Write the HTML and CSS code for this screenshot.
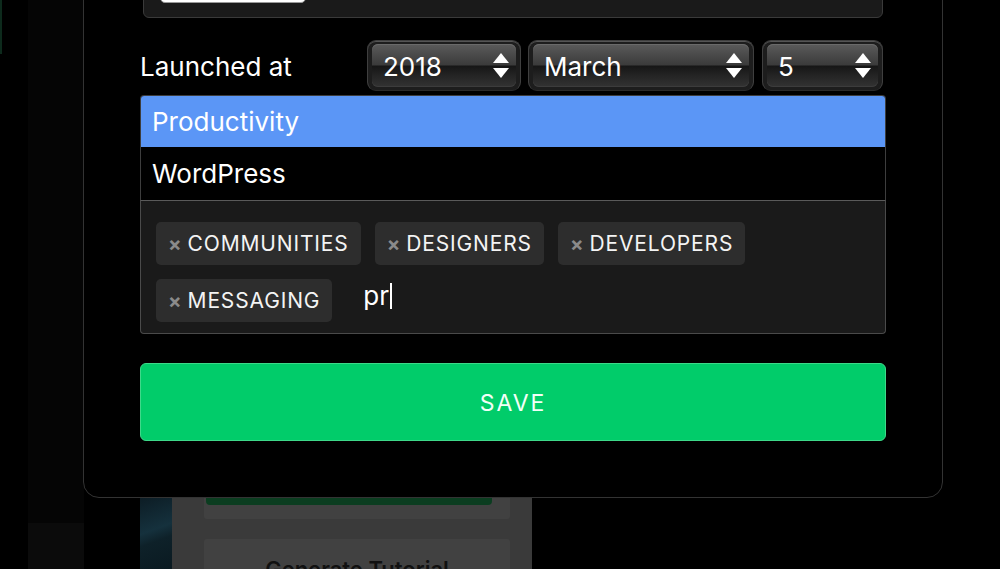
FILE: index.html
```html
<!DOCTYPE html>
<html lang="en">
<head>
<meta charset="utf-8">
<title>Edit product</title>
<link rel="stylesheet" href="styles.css">
</head>
<body>
<div class="stage">
  <div class="backdrop">
    <div class="bg-edge"></div>
    <div class="bg-strip"></div>
    <div class="bg-strip-low"></div>
    <div class="bg-blue"></div>
    <div class="bg-panel">
      <div class="bg-card bg-card-top"><div class="bg-green"></div></div>
      <div class="bg-card bg-card-low"><span class="bg-text">Generate Tutorial</span></div>
    </div>
  </div>

  <div class="modal">
    <div class="top-box"><div class="top-input"></div></div>

    <div class="launch-row">
      <span class="launch-label">Launched at</span>
      <div class="selects">
        <div class="sel sel-year"><div class="sel-inner"><span>2018</span>
          <svg class="arrows" viewBox="0 0 16 26" width="16" height="26"><polygon points="8,0 16,10 0,10" fill="#fff"/><polygon points="0,15 16,15 8,25" fill="#fff"/></svg></div></div>
        <div class="sel sel-month"><div class="sel-inner"><span>March</span>
          <svg class="arrows" viewBox="0 0 16 26" width="16" height="26"><polygon points="8,0 16,10 0,10" fill="#fff"/><polygon points="0,15 16,15 8,25" fill="#fff"/></svg></div></div>
        <div class="sel sel-day"><div class="sel-inner"><span>5</span>
          <svg class="arrows" viewBox="0 0 16 26" width="16" height="26"><polygon points="8,0 16,10 0,10" fill="#fff"/><polygon points="0,15 16,15 8,25" fill="#fff"/></svg></div></div>
      </div>
    </div>

    <div class="combo">
      <ul class="options">
        <li class="option option-active">Productivity</li>
        <li class="option">WordPress</li>
      </ul>
      <div class="tags">
        <span class="tag"><span class="tag-x">×</span>COMMUNITIES</span>
        <span class="tag"><span class="tag-x">×</span>DESIGNERS</span>
        <span class="tag"><span class="tag-x">×</span>DEVELOPERS</span>
        <span class="tag"><span class="tag-x">×</span>MESSAGING</span>
        <span class="tag-input">pr<span class="caret"></span></span>
      </div>
    </div>

    <button class="save">SAVE</button>
  </div>
</div>
</body>
</html>
```

FILE: styles.css
```css
* { box-sizing: border-box; }
html, body { margin: 0; padding: 0; background: #000; }
body { font-family: Inter, "Noto Sans", "Liberation Sans", sans-serif; color: #fff; }

.stage {
  position: relative;
  width: 1000px;
  height: 569px;
  overflow: hidden;
  background: #000;
}

/* obscured page underneath */
.backdrop { position: absolute; inset: 0; }
.bg-edge { position: absolute; left: 0; top: 0; width: 2px; height: 54px; background: #0d2a1c; }
.bg-strip { position: absolute; left: 28px; top: 0; width: 56px; height: 569px; background: #050505; }
.bg-strip-low { position: absolute; left: 28px; top: 523px; width: 56px; height: 46px; background: #0b0b0b; }
.bg-blue {
  position: absolute; left: 140px; top: 497px; width: 32px; height: 72px;
  background: linear-gradient(160deg, #0c1c24 0%, #15313d 45%, #0e2129 60%, #0a1a21 100%);
}
.bg-panel {
  position: absolute; left: 172px; top: 497px; width: 360px; height: 72px;
  background: #3a3a3a;
  padding: 0 22px 0 32px;
  display: flex; flex-direction: column; gap: 20px;
  overflow: hidden;
}
.bg-card { background: #414141; border-radius: 3px; flex: none; }
.bg-card-top { height: 26px; margin-top: -4px; padding: 0 18px 0 2px; }
.bg-green { height: 12px; background: #0b3d20; border-radius: 0 0 4px 4px; }
.bg-card-low { height: 60px; text-align: center; padding-top: 19px; }
.bg-text { font-size: 22px; font-weight: 600; color: #111; line-height: 1; }

/* modal */
.modal {
  position: absolute;
  left: 83px;
  top: -80px;
  width: 860px;
  border: 1px solid #333;
  border-radius: 16px;
  background: #000;
  padding: 0 56px 56px 56px;
}

.top-box {
  margin: 36px 3px 0;
  height: 61px;
  border: 1px solid #3a3a3a;
  border-radius: 6px;
  background: #1a1a1a;
  padding: 8px 16px;
}
.top-input {
  width: 146px; height: 37px;
  background: #fff;
  border: 1px solid #999;
  border-radius: 5px;
}

.launch-row {
  margin-top: 22px;
  display: flex;
  align-items: center;
  height: 51px;
}
.launch-label {
  width: 227px;
  font-size: 26px;
  line-height: 1;
  padding-top: 2px;
}
.selects { display: flex; gap: 7px; }
.sel {
  height: 51px;
  border-radius: 9px;
  background: #1d1d1d;
  border: 1px solid #3f3f3f;
  border-bottom-color: #2a2a2a;
  padding: 3px 4px;
  box-shadow: inset 0 1px 0 #555;
}
.sel-year { width: 154px; }
.sel-month { width: 226px; }
.sel-day { width: 121px; margin-left: 1px; }
.sel-inner {
  height: 100%;
  border-radius: 6px;
  background: linear-gradient(to bottom, #5b5b5b 0%, #474747 30%, #3b3b3b 49%, #161616 51%, #1f1f1f 65%, #333 100%);
  box-shadow: inset 0 1px 0 #6a6a6a, inset 0 -1px 0 #3c3c3c;
  display: flex;
  align-items: center;
  justify-content: space-between;
  padding: 0 7px 0 11px;
  font-size: 26px;
  line-height: 1;
}
.sel-inner span { padding-top: 2px; }
.arrows { display: block; margin-top: 1px; }

/* combobox */
.combo { margin-top: 4px; }
.options {
  list-style: none;
  margin: 0; padding: 0;
  border: 1px solid #3d3d3d;
  border-bottom: none;
  border-radius: 4px 4px 0 0;
  overflow: hidden;
}
.option {
  height: 53px;
  display: flex;
  align-items: center;
  padding-left: 11px;
  font-size: 26px;
  background: #000;
}
.option-active { background: #5b96f6; height: 51px; }

.tags {
  height: 134px;
  border: 1px solid #4a4a4a;
  border-top-color: #5a5a5a;
  border-radius: 0 0 4px 4px;
  background: #1a1a1a;
  padding: 21px 12px 0 15px;
  display: flex;
  flex-wrap: wrap;
  align-content: flex-start;
  column-gap: 14px;
  row-gap: 14px;
}
.tag {
  height: 43px;
  display: inline-flex;
  align-items: center;
  padding: 0 12px 0 12px;
  background: #2d2d2d;
  border-radius: 5px;
  font-size: 21px;
  letter-spacing: 0.85px;
  color: #f4f4f4;
}
.tag-x {
  color: #8a8a8a;
  font-size: 20px;
  font-weight: 700;
  margin-right: 6px;
  letter-spacing: 0;
}
.tag-input {
  display: inline-flex;
  align-items: center;
  height: 43px;
  margin-left: 17px;
  font-size: 26px;
  color: #fff;
  padding-bottom: 10px;
}
.caret { display: inline-block; width: 2px; height: 26px; background: #fff; margin-left: 1px; }

.save {
  display: block;
  width: 100%;
  margin-top: 29px;
  height: 78px;
  border: 1px solid #3ed98a;
  border-radius: 6px;
  background: #01cc6a;
  color: #f2fff7;
  font-family: Inter, "Noto Sans", "Liberation Sans", sans-serif;
  font-size: 23px;
  letter-spacing: 2px;
  padding: 2px 0 0;
}
```
